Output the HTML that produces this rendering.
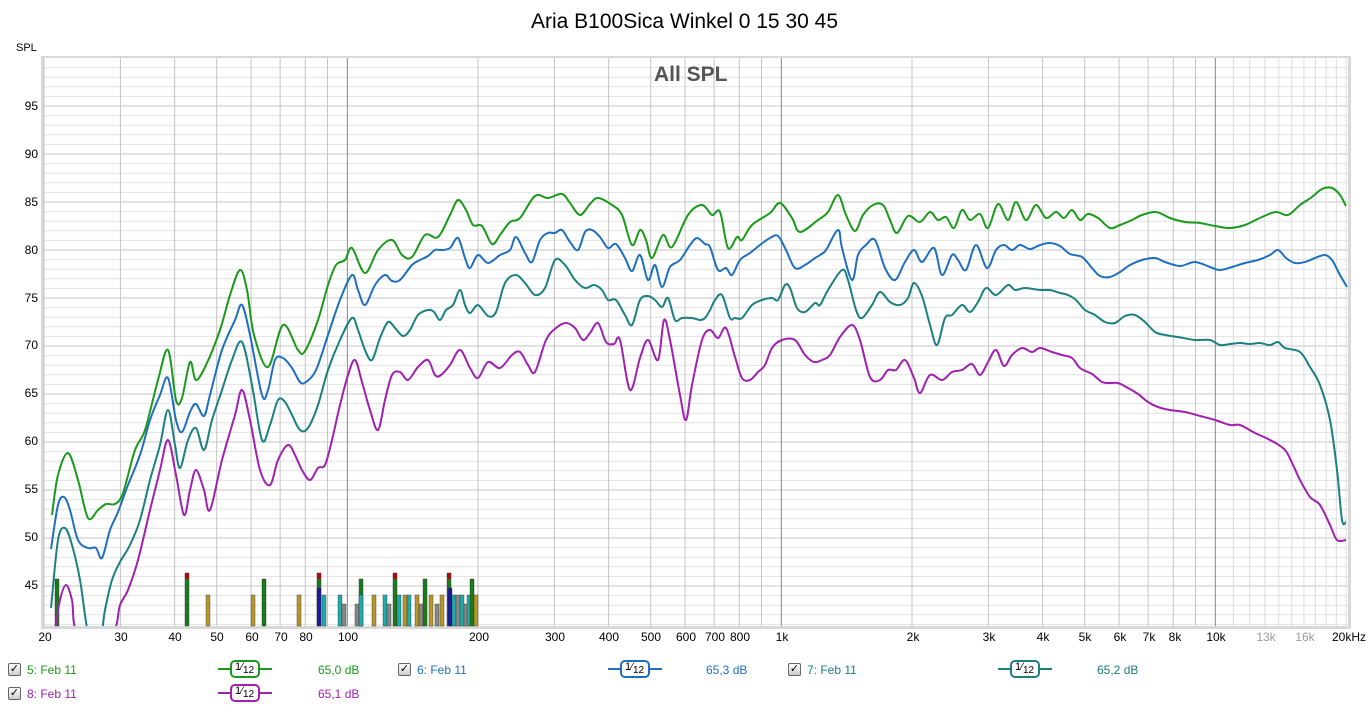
<!DOCTYPE html>
<html><head><meta charset="utf-8">
<style>
body{margin:0;width:1369px;height:708px;background:#fff;position:relative;overflow:hidden;font-family:"Liberation Sans",sans-serif;}
.t{position:absolute;white-space:nowrap;font-size:12px;color:#000;}
.yl{position:absolute;right:1331px;font-size:12px;text-align:right;}
.xl{position:absolute;top:630px;font-size:12px;transform:translateX(-50%);}
.cb{position:absolute;width:11px;height:11px;border:1px solid #666;background:linear-gradient(#fff,#ccc);border-radius:2px;font-size:11px;line-height:11px;text-align:center;color:#000;}
.lg{position:absolute;font-size:12px;}
</style></head><body>
<div class="t" style="left:0;width:1369px;text-align:center;top:10px;font-size:21px;">Aria B100Sica Winkel 0 15 30 45</div>
<div class="t" style="left:16px;top:42px;font-size:11px;">SPL</div>
<svg id="s" width="1369" height="708" style="position:absolute;left:0;top:0"></svg>
<div class="t" style="left:654px;top:63px;font-size:21px;font-weight:bold;color:#555;">All SPL</div>
<div class="yl" style="top:99px">95</div><div class="yl" style="top:147px">90</div><div class="yl" style="top:195px">85</div><div class="yl" style="top:243px">80</div><div class="yl" style="top:291px">75</div><div class="yl" style="top:338px">70</div><div class="yl" style="top:386px">65</div><div class="yl" style="top:434px">60</div><div class="yl" style="top:482px">55</div><div class="yl" style="top:530px">50</div><div class="yl" style="top:578px">45</div>
<div class="xl" style="left:45px">20</div><div class="xl" style="left:121px">30</div><div class="xl" style="left:175px">40</div><div class="xl" style="left:217px">50</div><div class="xl" style="left:252px">60</div><div class="xl" style="left:281px">70</div><div class="xl" style="left:306px">80</div><div class="xl" style="left:348px">100</div><div class="xl" style="left:479px">200</div><div class="xl" style="left:555px">300</div><div class="xl" style="left:609px">400</div><div class="xl" style="left:651px">500</div><div class="xl" style="left:686px">600</div><div class="xl" style="left:715px">700</div><div class="xl" style="left:740px">800</div><div class="xl" style="left:782px">1k</div><div class="xl" style="left:913px">2k</div><div class="xl" style="left:989px">3k</div><div class="xl" style="left:1043px">4k</div><div class="xl" style="left:1085px">5k</div><div class="xl" style="left:1120px">6k</div><div class="xl" style="left:1149px">7k</div><div class="xl" style="left:1175px">8k</div><div class="xl" style="left:1216px">10k</div><div class="xl" style="left:1266px;color:#999">13k</div><div class="xl" style="left:1305px;color:#999">16k</div><div class="xl" style="left:1349px">20kHz</div>

<div class="cb" style="left:8px;top:663px">✓</div><div class="lg" style="left:27px;top:663px;color:#1a9a1a">5: Feb 11</div><div class="lg" style="left:318px;top:663px;color:#1a9a1a">65,0 dB</div>
<div class="cb" style="left:398px;top:663px">✓</div><div class="lg" style="left:417px;top:663px;color:#1f6fc0">6: Feb 11</div><div class="lg" style="left:706px;top:663px;color:#1f6fc0">65,3 dB</div>
<div class="cb" style="left:788px;top:663px">✓</div><div class="lg" style="left:807px;top:663px;color:#1a8080">7: Feb 11</div><div class="lg" style="left:1097px;top:663px;color:#1a8080">65,2 dB</div>
<div class="cb" style="left:8px;top:687px">✓</div><div class="lg" style="left:27px;top:687px;color:#a020b0">8: Feb 11</div><div class="lg" style="left:318px;top:687px;color:#a020b0">65,1 dB</div>
<div class="lg" style="left:235px;top:661px;font-size:11px">1⁄<sub style="font-size:10px">12</sub></div>
<div class="lg" style="left:625px;top:661px;font-size:11px">1⁄<sub style="font-size:10px">12</sub></div>
<div class="lg" style="left:1015px;top:661px;font-size:11px">1⁄<sub style="font-size:10px">12</sub></div>
<div class="lg" style="left:235px;top:685px;font-size:11px">1⁄<sub style="font-size:10px">12</sub></div>
<script>
var s=document.getElementById('s'),h='';
var L=44,R=1348,T=58,B=626;
function X(f){return 44+434*Math.log10(f/20);}
function Y(d){return 58+(100-d)*9.6;}
h+='<rect x="41" y="56" width="1310" height="573" fill="#d8d8d8"/><rect x="'+L+'" y="'+T+'" width="'+(R-L)+'" height="'+(B-T)+'" fill="#fff"/>';
for(var d=41;d<=99;d++){var y=Y(d);h+='<line x1="'+L+'" x2="'+R+'" y1="'+y+'" y2="'+y+'" stroke="'+(d%5==0?'#c4c4c4':'#e2e2e2')+'"/>';}
var fs=[];for(var f=20;f<100;f+=10)fs.push(f);for(f=100;f<1000;f+=100)fs.push(f);for(f=1000;f<10000;f+=1000)fs.push(f);for(f=10000;f<=20000;f+=1000)fs.push(f);
fs.forEach(function(f){var x=X(f);var c=(f==100||f==1000||f==10000)?'#888':(f>10000?'#dcdcdc':'#c4c4c4');h+='<line x1="'+x+'" x2="'+x+'" y1="'+T+'" y2="'+B+'" stroke="'+c+'"/>';});
var bars=[[55,579,'#1a7a1a'],[185,573,'#1a7a1a',1],[206,595,'#b8962a'],[251,595,'#b8962a'],[262,579,'#1a7a1a'],[297,595,'#b8962a'],[317,573,'#1a7a1a',1],[317,588,'#1a1a9a'],[322,595,'#22aaaa'],[338,595,'#22aaaa'],[342,604,'#888'],[355,604,'#888'],[359,579,'#1a7a1a'],[359,595,'#22aaaa'],[372,595,'#b8962a'],[383,595,'#22aaaa'],[387,604,'#888'],[393,573,'#1a7a1a',1],[397,595,'#22aaaa'],[403,595,'#b8962a'],[407,595,'#22aaaa'],[415,595,'#b8962a'],[419,604,'#888'],[423,579,'#1a7a1a'],[429,595,'#b8962a'],[435,604,'#888'],[440,595,'#b8962a'],[447,573,'#1a7a1a',1],[448,588,'#1a1a9a'],[452,595,'#22aaaa'],[456,595,'#888'],[460,595,'#22aaaa'],[464,604,'#888'],[467,595,'#22aaaa'],[470,579,'#1a7a1a'],[474,595,'#b8962a']];
bars.forEach(function(b){h+='<rect x="'+b[0]+'" y="'+b[1]+'" width="4" height="'+(B-b[1])+'" fill="'+b[2]+'" stroke="#333" stroke-width="0.4"/>';if(b[3])h+='<rect x="'+b[0]+'" y="'+b[1]+'" width="4" height="6" fill="#a01010"/>';});
function path(p){var d='M'+p[0][0]+','+p[0][1];for(var i=0;i<p.length-1;i++){var p0=p[i-1]||p[i],p1=p[i],p2=p[i+1],p3=p[i+2]||p2;d+=' C'+(p1[0]+(p2[0]-p0[0])/6).toFixed(1)+','+(p1[1]+(p2[1]-p0[1])/6).toFixed(1)+' '+(p2[0]-(p3[0]-p1[0])/6).toFixed(1)+','+(p2[1]-(p3[1]-p1[1])/6).toFixed(1)+' '+p2[0]+','+p2[1];}return d;}
var G=[[52,515],[58,475],[68,453],[78,480],[88,518],[98,510],[106,504],[115,504],[123,493],[135,450],[145,430],[158,380],[168,350],[176,400],[182,398],[190,362],[196,380],[206,365],[220,330],[230,295],[240,270],[247,290],[254,335],[268,367],[283,325],[298,350],[305,351],[318,320],[328,285],[336,265],[345,260],[352,248],[365,273],[378,250],[392,240],[402,255],[412,257],[425,235],[438,237],[450,215],[458,200],[466,210],[473,225],[482,226],[492,244],[500,235],[510,222],[520,218],[535,196],[548,198],[562,194],[570,203],[580,215],[590,204],[598,198],[612,205],[622,215],[632,245],[640,230],[646,240],[652,258],[663,235],[672,247],[688,215],[702,205],[712,215],[720,212],[728,248],[737,237],[742,240],[752,225],[770,213],[780,203],[792,218],[800,232],[818,220],[828,212],[838,195],[846,215],[855,231],[863,215],[873,205],[883,205],[890,220],[897,233],[908,216],[920,222],[930,212],[938,220],[946,217],[954,228],[962,210],[970,220],[980,214],[988,228],[998,204],[1008,220],[1016,202],[1026,220],[1036,205],[1046,218],[1056,212],[1064,218],[1072,210],[1080,220],[1088,214],[1098,218],[1110,228],[1120,225],[1132,220],[1142,215],[1156,212],[1170,218],[1185,222],[1200,223],[1215,226],[1230,228],[1245,225],[1262,217],[1276,212],[1288,215],[1300,205],[1312,197],[1322,189],[1332,188],[1340,195],[1346,206]];
var Bl=[[51,549],[58,505],[64,497],[70,510],[78,540],[88,548],[96,548],[102,558],[110,530],[118,512],[128,485],[140,455],[150,420],[160,395],[168,378],[176,420],[182,432],[190,412],[196,404],[204,416],[210,395],[222,350],[235,320],[242,305],[250,335],[262,395],[268,390],[275,360],[283,358],[292,368],[300,382],[306,382],[316,370],[328,335],[340,300],[352,275],[358,290],[365,305],[375,285],[385,275],[392,281],[400,280],[412,265],[420,260],[428,256],[435,250],[442,250],[450,248],[458,238],[465,258],[470,268],[478,255],[488,263],[500,255],[510,250],[516,237],[525,253],[532,262],[540,240],[548,233],[555,233],[562,230],[570,242],[578,250],[585,232],[592,230],[600,237],[608,248],[616,244],[625,258],[632,271],[640,255],[648,280],[655,265],[662,287],[670,267],[680,260],[690,245],[697,238],[705,244],[710,247],[718,270],[726,268],[732,275],[740,260],[750,253],[760,245],[770,238],[778,236],[786,250],[795,268],[805,265],[815,258],[820,255],[826,250],[838,230],[842,248],[852,280],[858,255],[866,245],[875,240],[885,268],[895,280],[905,262],[914,250],[922,262],[934,248],[942,275],[952,255],[958,260],[966,270],[976,245],[987,268],[996,250],[1004,245],[1012,250],[1020,245],[1030,249],[1040,245],[1050,243],[1060,246],[1070,254],[1082,257],[1092,268],[1100,276],[1110,277],[1120,272],[1130,265],[1142,260],[1155,258],[1165,262],[1180,266],[1195,262],[1210,267],[1220,270],[1232,267],[1245,263],[1258,260],[1270,255],[1278,250],[1286,258],[1295,263],[1305,262],[1315,258],[1325,255],[1332,260],[1340,275],[1347,287]];
var Te=[[51,608],[58,540],[65,528],[72,545],[80,580],[86,622],[90,640],[100,640],[105,610],[112,580],[120,562],[130,545],[140,520],[150,480],[160,445],[168,410],[175,445],[180,468],[188,440],[196,428],[204,450],[212,420],[222,390],[232,360],[242,342],[252,385],[262,440],[270,425],[278,400],[285,402],[292,415],[300,430],[308,428],[318,405],[328,370],[340,340],[352,318],[358,330],[365,350],[372,360],[380,338],[388,322],[395,328],[403,336],[410,330],[418,315],[428,310],[434,312],[440,320],[446,310],[453,305],[460,290],[465,305],[470,313],[478,305],[488,316],[496,312],[505,283],[516,275],[525,283],[535,295],[545,288],[555,260],[565,265],[575,280],[585,288],[594,285],[602,290],[608,300],[616,300],[625,315],[632,325],[640,300],[648,296],[655,300],[662,307],[668,298],[675,320],[682,318],[692,318],[700,320],[705,318],[710,310],[715,300],[722,295],[730,318],[735,318],[742,318],[752,305],[762,300],[772,298],[778,300],[785,285],[790,288],[797,308],[805,312],[815,303],[820,305],[828,290],[842,270],[848,280],[856,310],[862,318],[872,305],[880,292],[890,302],[900,305],[908,298],[914,283],[922,296],[930,325],[937,345],[945,318],[952,315],[962,305],[970,312],[978,302],[986,288],[996,295],[1008,285],[1015,290],[1025,288],[1040,290],[1050,290],[1060,293],[1068,295],[1076,300],[1085,310],[1095,315],[1105,322],[1115,323],[1125,316],[1135,315],[1145,322],[1155,332],[1165,335],[1178,337],[1195,340],[1210,340],[1220,345],[1230,344],[1240,343],[1250,344],[1260,343],[1270,345],[1278,342],[1285,348],[1300,352],[1310,367],[1320,385],[1330,420],[1337,470],[1342,520],[1346,522]];
var M=[[55,630],[60,600],[66,585],[72,600],[78,632],[112,632],[120,605],[128,590],[138,560],[150,510],[160,470],[168,440],[176,475],[184,515],[190,490],[196,470],[204,490],[210,510],[222,460],[235,415],[242,390],[250,420],[260,470],[270,485],[278,460],[288,445],[295,455],[302,470],[310,480],[318,468],[325,465],[332,440],[340,405],[348,375],[355,360],[362,382],[370,410],[378,430],[385,400],[392,375],[400,372],[408,380],[418,367],[428,360],[435,375],[441,375],[450,365],[460,350],[470,368],[478,378],[488,362],[500,368],[512,355],[520,352],[528,365],[535,372],[546,340],[556,328],[566,323],[575,328],[583,340],[590,333],[598,323],[606,342],[614,344],[620,340],[630,390],[640,358],[648,340],[658,360],[664,320],[670,340],[680,395],[686,420],[692,385],[702,340],[710,330],[718,338],[726,328],[735,357],[742,378],[750,380],[758,372],[765,365],[772,348],[782,340],[795,340],[805,355],[814,362],[822,360],[830,355],[840,337],[852,325],[860,340],[870,377],[880,380],[888,370],[896,370],[905,360],[914,378],[920,393],[930,375],[942,380],[952,372],[962,370],[972,364],[980,375],[988,362],[996,350],[1004,366],[1012,355],[1022,348],[1032,352],[1040,348],[1052,352],[1062,355],[1072,358],[1080,368],[1092,374],[1102,382],[1110,383],[1118,383],[1128,388],[1138,394],[1148,402],[1158,407],[1170,410],[1185,412],[1200,416],[1215,420],[1230,425],[1240,425],[1255,433],[1270,440],[1285,450],[1293,465],[1300,480],[1310,497],[1320,505],[1330,525],[1337,540],[1346,540]];
h+='<defs><clipPath id="c"><rect x="'+L+'" y="'+T+'" width="'+(R-L)+'" height="'+(B-T)+'"/></clipPath></defs><g clip-path="url(#c)" fill="none" stroke-width="2">';
h+='<path d="'+path(M)+'" stroke="#a020b0"/><path d="'+path(Te)+'" stroke="#1a8080"/><path d="'+path(Bl)+'" stroke="#1f6fc0"/><path d="'+path(G)+'" stroke="#1a9a1a"/></g>';
function leg(x,y,c){h+='<line x1="'+x+'" x2="'+(x+54)+'" y1="'+y+'" y2="'+y+'" stroke="'+c+'" stroke-width="2"/><rect x="'+(x+13)+'" y="'+(y-8)+'" width="28" height="16" rx="4" fill="#fff" stroke="'+c+'" stroke-width="2"/>';}
leg(218,669,'#1a9a1a');leg(608,669,'#1f6fc0');leg(998,669,'#1a8080');leg(218,693,'#a020b0');
s.innerHTML=h;
</script>
</body></html>
